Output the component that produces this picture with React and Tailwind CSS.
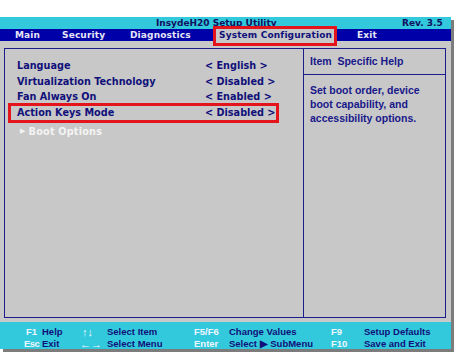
const items = [
  { label: "Language", value: "< English >" },
  { label: "Virtualization Technology", value: "< Disabled >" },
  { label: "Fan Always On", value: "< Enabled >" },
  { label: "Action Keys Mode", value: "< Disabled >", boxed: true },
];

function FooterKey({ k, text, keyW, textW }) {
  return (
    <div className="flex">
      <span className={`${keyW} text-[#eef6ff]`}>{k}</span>
      <span className={`${textW} text-[#10107a]`}>{text}</span>
    </div>
  );
}

export default function App() {
  return (
    <div className="w-[458px] h-[355px] bg-white pt-[17px] font-['DejaVu_Sans',sans-serif]">
      <div className="w-[451px] flex flex-col shadow-[3px_3px_0_#7c7c7c]">
        {/* title bar */}
        <div className="h-[12px] bg-[#33c9dc] relative flex items-center pl-[156px] pt-[1px] text-[9px] font-bold leading-none text-[#101060]">
          <span>InsydeH20 Setup Utility</span>
          <span className="absolute left-[402px] top-[2px]">Rev. 3.5</span>
        </div>

        {/* menu bar */}
        <div className="h-[12px] bg-[#0000a8] relative flex items-center text-[9px] font-bold leading-none tracking-[0.15px] text-[#e6e6f6]">
          <span className="ml-[15px] w-[47px]">Main</span>
          <span className="w-[68px]">Security</span>
          <span className="w-[89px]">Diagnostics</span>
          <span className="w-[138px] relative h-full flex items-center text-[#10107a]">
            <span className="absolute -left-[6px] w-[124px] top-[-3px] bottom-[-5px] bg-[#c8c8c8] border-[3px] border-[#e4141c]" />
            <span className="relative">System Configuration</span>
          </span>
          <span>Exit</span>
        </div>

        {/* body */}
        <div className="bg-[#c8c8c8] pt-[7px] pl-[4px] pr-[5px] pb-[4px]">
          <div className="h-[270px] border border-[#1c1c8c] flex">
            <div className="w-[298px] pt-[9px] flex flex-col text-[9.7px] font-bold leading-none text-[#10107a]">
              {items.map((it) => (
                <div key={it.label} className="relative h-[15.7px] flex items-center">
                  {it.boxed && (
                    <span className="absolute left-[3px] w-[271px] top-[-2px] bottom-[-2px] border-[3px] border-[#e4141c]" />
                  )}
                  <span className="relative w-[200px] pl-[12px]">{it.label}</span>
                  <span className="relative">{it.value}</span>
                </div>
              ))}
              <div className="flex items-center h-[20px] mt-[1px] pl-[15px] text-[#f4f4f4] tracking-[0.2px]">
                <span className="text-[7px] mr-[3px]">▶</span>
                <span>Boot Options</span>
              </div>
            </div>
            <div className="flex-1 border-l border-[#1c1c8c] flex flex-col font-bold text-[#18188a] font-['Liberation_Sans',sans-serif]">
              <div className="h-[26px] border-b border-[#1c1c8c] pl-[6px] pt-[7px] text-[10.5px] leading-none">
                Item&nbsp;&nbsp;Specific Help
              </div>
              <div className="pl-[6px] pt-[8px] leading-[14px] text-[10.5px]">
                <div>Set boot order, device</div>
                <div>boot capability, and</div>
                <div>accessibility options.</div>
              </div>
            </div>
          </div>
        </div>

        {/* footer */}
        <div className="h-[27px] bg-[#33c9dc] pl-[24px] pt-[4px] flex flex-col justify-center text-[9.5px] font-bold leading-[12px] font-['Liberation_Sans',sans-serif]">
          <div className="flex">
            <FooterKey k="F1" text="Help" keyW="w-[18px] pl-[2px]" textW="w-[38px]" />
            <FooterKey k="↑↓" text="Select Item" keyW="w-[27px] pl-[2px] text-[11px]" textW="w-[87px]" />
            <FooterKey k="F5/F6" text="Change Values" keyW="w-[35px]" textW="w-[102px]" />
            <FooterKey k="F9" text="Setup Defaults" keyW="w-[33px]" textW="" />
          </div>
          <div className="flex">
            <FooterKey k="Esc" text="Exit" keyW="w-[18px] tracking-[-0.6px]" textW="w-[38px]" />
            <FooterKey k="←→" text="Select Menu" keyW="w-[27px] text-[11px]" textW="w-[87px]" />
            <FooterKey k="Enter" text="Select ▶ SubMenu" keyW="w-[35px]" textW="w-[102px]" />
            <FooterKey k="F10" text="Save and Exit" keyW="w-[33px]" textW="" />
          </div>
        </div>
      </div>
    </div>
  );
}
